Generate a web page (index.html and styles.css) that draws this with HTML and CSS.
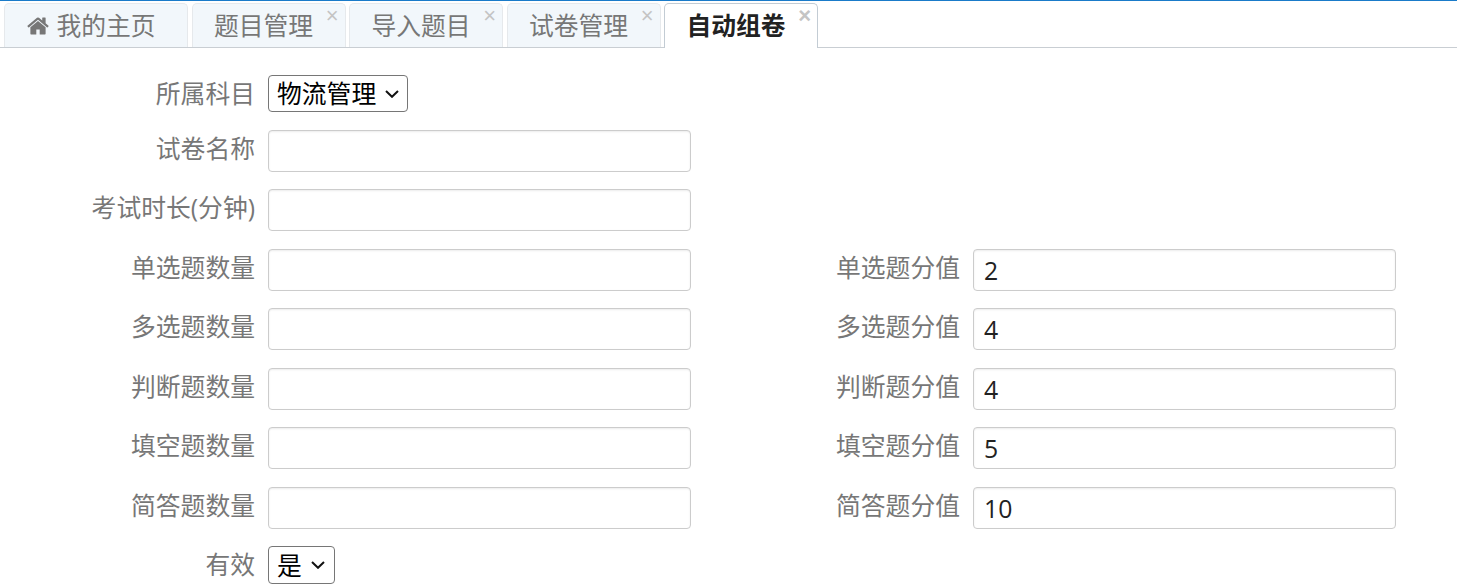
FILE: index.html
```html
<!DOCTYPE html>
<html lang="zh-CN">
<head>
<meta charset="utf-8">
<title>自动组卷</title>
<link rel="stylesheet" href="styles.css">
</head>
<body>
<nav class="tabs">
  <div class="tab tab-home"><svg class="home" viewBox="0 240 1664 1310"><path d="M1408 992v480q0 26-19 45t-45 19h-384v-384H704v384H320q-26 0-45-19t-19-45V992q0-1 .5-3t.5-3l575-474 575 474q1 2 1 6zm223-69-62 74q-8 9-21 11h-3q-13 0-21-7L832 424 140 1001q-12 8-24 7-13-2-21-11l-62-74q-8-10-7-23.5T37 878L756 279q32-26 76-26t76 26l244 204V288q0-14 9-23t23-9h192q14 0 23 9t9 23v408l219 182q10 8 11 21.5t-7 23.5z"/></svg><span>我的主页</span></div>
  <div class="tab"><span>题目管理</span><i class="close">×</i></div>
  <div class="tab"><span>导入题目</span><i class="close">×</i></div>
  <div class="tab"><span>试卷管理</span><i class="close">×</i></div>
  <div class="tab active"><span>自动组卷</span><i class="close">×</i></div>
</nav>
<form class="form">
  <div class="row row-select"><label class="lbl">所属科目</label><span class="select"><span class="sel-text">物流管理</span><svg class="chev" viewBox="0 0 14 8"><path d="M1 1l6 5.8L13 1"/></svg></span></div>
  <div class="row"><label class="lbl">试卷名称</label><input class="inp" type="text"></div>
  <div class="row"><label class="lbl">考试时长(分钟)</label><input class="inp" type="text"></div>
  <div class="row"><label class="lbl">单选题数量</label><input class="inp" type="text"><label class="lbl lbl2">单选题分值</label><input class="inp" type="text" value="2"></div>
  <div class="row"><label class="lbl">多选题数量</label><input class="inp" type="text"><label class="lbl lbl2">多选题分值</label><input class="inp" type="text" value="4"></div>
  <div class="row"><label class="lbl">判断题数量</label><input class="inp" type="text"><label class="lbl lbl2">判断题分值</label><input class="inp" type="text" value="4"></div>
  <div class="row"><label class="lbl">填空题数量</label><input class="inp" type="text"><label class="lbl lbl2">填空题分值</label><input class="inp" type="text" value="5"></div>
  <div class="row"><label class="lbl">简答题数量</label><input class="inp" type="text"><label class="lbl lbl2">简答题分值</label><input class="inp" type="text" value="10"></div>
  <div class="row row-select row-last"><label class="lbl">有效</label><span class="select"><span class="sel-text">是</span><svg class="chev" viewBox="0 0 14 8"><path d="M1 1l6 5.8L13 1"/></svg></span></div>
</form>
</body>
</html>
```
FILE: styles.css
```css
* { box-sizing: border-box; }
html, body { margin: 0; padding: 0; }
body {
  width: 1457px;
  height: 587px;
  overflow: hidden;
  background: #fff;
  border-top: 1px solid #1a7bc9;
  font-family: "Open Sans", "Noto Sans CJK SC", sans-serif;
  font-size: 24.8px;
  color: #676a6c;
}
.tabs {
  display: flex;
  height: 47px;
  padding: 2px 0 0 4px;
  gap: 3.5px;
  border-bottom: 1px solid #c9ced3;
}
.tab {
  position: relative;
  width: 154px;
  height: 44px;
  display: flex;
  align-items: center;
  justify-content: center;
  padding: 0 10px 2px 0;
  background: #f2f7fb;
  border: 1px solid #e6e9ec;
  border-bottom: 0;
  border-radius: 5px 5px 0 0;
  color: #777;
  line-height: 40px;
}
.tab-home { width: 184px; padding-right: 9px; }
.home { flex: none; width: 22px; height: 18px; margin: 2px 7px 0 0; fill: #777; }
.close {
  position: absolute;
  top: -1px;
  right: 6px;
  font-style: normal;
  font-family: "Liberation Sans", sans-serif;
  font-size: 22px;
  line-height: 26px;
  color: #c4c4c4;
}
.tab.active {
  height: 45px;
  padding-bottom: 3px;
  background: #fff;
  border-color: #c3ccd4;
  color: #222;
  font-weight: 700;
}
.form { padding-top: 27px; }
.row {
  display: flex;
  align-items: center;
  height: 42px;
  margin-bottom: 17.5px;
}
.row-select { height: 37px; }
.row-select:first-child { margin-bottom: 17.75px; }
.row-last { margin-bottom: 0; height: 38px; }
.lbl {
  width: 255px;
  text-align: right;
  color: #777;
  line-height: 36px;
  position: relative;
  top: -3px;
}
.row-select .lbl { top: -1px; }
.lbl2 { width: 269px; }
.inp {
  width: 423px;
  height: 42px;
  margin-left: 13px;
  padding: 0 10px;
  border: 1px solid #ccc;
  border-radius: 4px;
  box-shadow: inset 0 1px 2px rgba(0, 0, 0, .08);
  background: #fff;
  font: inherit;
  color: #222;
  outline: 0;
}
.select {
  display: flex;
  align-items: center;
  height: 100%;
  margin-left: 13px;
  padding: 0 8px;
  border: 1px solid #767676;
  border-radius: 4px;
  background: #fff;
  color: #000;
  line-height: 1;
}
.row-last .select { padding-right: 9px; }
.chev {
  flex: none;
  width: 14px;
  height: 8px;
  margin-left: 9px;
  fill: none;
  stroke: #111;
  stroke-width: 2;
}
```
